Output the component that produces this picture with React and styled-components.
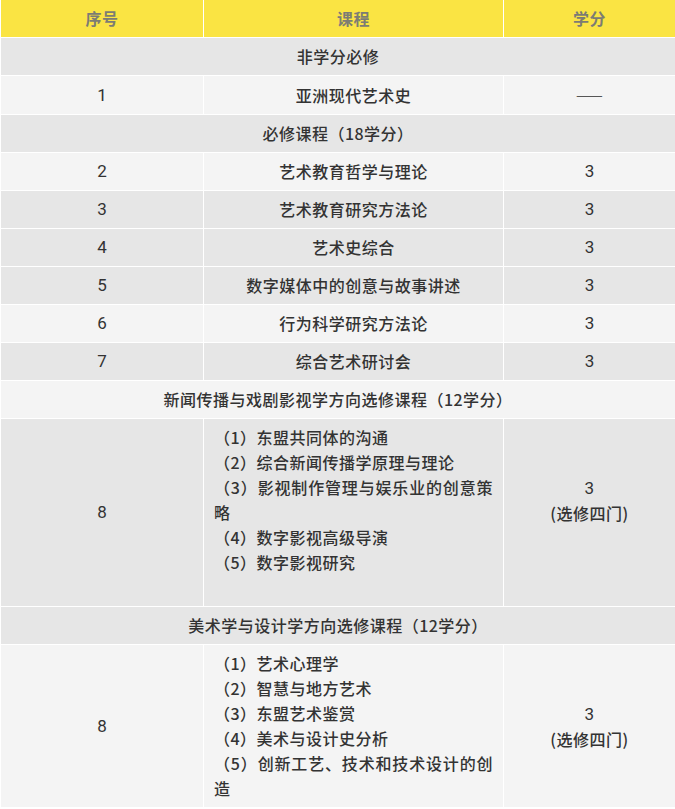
import React from "react";
import styled, { createGlobalStyle } from "styled-components";

const GlobalStyle = createGlobalStyle`
  html, body { margin: 0; padding: 0; background: #ffffff; }
  body { font-family: "Roboto", "Noto Sans CJK SC", "Noto Sans", sans-serif; }
`;

const tones = {
  yellow: "#fae443",
  dark: "#e6e6e6",
  light: "#f4f4f4",
};

const Table = styled.table`
  width: 675px;
  border-collapse: collapse;
  table-layout: fixed;
  font-size: 16px;
  line-height: 25px;
  color: #333333;
`;

const Col = styled.col`
  width: ${(p) => p.$w}px;
`;

const HeadCell = styled.th`
  background: ${tones.yellow};
  color: #7c7c74;
  font-family: "Noto Sans CJK SC", sans-serif;
  font-weight: 700;
  font-size: 16px;
  letter-spacing: 0.5px;
  height: 24px;
  padding: 6px 10px;
  text-align: center;
  border: 1px solid #ffffff;
  border-top: none;
`;

const Cell = styled.td`
  background: ${(p) => tones[p.$tone]};
  padding: 6px 10px;
  text-align: ${(p) => (p.$left ? "justify" : "center")};
  vertical-align: middle;
  border: 1px solid #ffffff;
  font-weight: ${(p) => (p.$num ? 400 : 500)};
  font-size: ${(p) => (p.$num ? 17 : 16)}px;
  letter-spacing: ${(p) => (p.$num ? 0 : 0.5)}px;
  font-family: ${(p) =>
    p.$num ? `"Roboto", "Noto Sans CJK SC", sans-serif` : `"Noto Sans CJK SC", sans-serif`};
`;

const Digit = styled.span`
  font-family: "Roboto", sans-serif;
  font-weight: 400;
  font-size: 17px;
`;

const Dash = styled.span`
  color: #555;
  font-family: "Noto Sans CJK SC", sans-serif;
  font-weight: 400;
  font-size: 16px;
`;

const Lines = ({ items, trailing }) => (
  <>
    {items.map((t, i) => (
      <React.Fragment key={i}>
        {t}
        {i < items.length - 1 && <br />}
      </React.Fragment>
    ))}
    {trailing && (
      <>
        <br />
        <br />
      </>
    )}
  </>
);

const rows = [
  { section: "非学分必修", tone: "dark" },
  { no: "1", name: "亚洲现代艺术史", credit: "dash", tone: "light" },
  { section: "必修课程（18学分）", tone: "dark" },
  { no: "2", name: "艺术教育哲学与理论", credit: "3", tone: "light" },
  { no: "3", name: "艺术教育研究方法论", credit: "3", tone: "dark" },
  { no: "4", name: "艺术史综合", credit: "3", tone: "dark" },
  { no: "5", name: "数字媒体中的创意与故事讲述", credit: "3", tone: "dark" },
  { no: "6", name: "行为科学研究方法论", credit: "3", tone: "light" },
  { no: "7", name: "综合艺术研讨会", credit: "3", tone: "dark" },
  { section: "新闻传播与戏剧影视学方向选修课程（12学分）", tone: "light" },
  {
    no: "8",
    list: [
      "（1）东盟共同体的沟通",
      "（2）综合新闻传播学原理与理论",
      "（3）影视制作管理与娱乐业的创意策略",
      "（4）数字影视高级导演",
      "（5）数字影视研究",
    ],
    trailing: true,
    tone: "dark",
  },
  { section: "美术学与设计学方向选修课程（12学分）", tone: "dark" },
  {
    no: "8",
    list: [
      "（1）艺术心理学",
      "（2）智慧与地方艺术",
      "（3）东盟艺术鉴赏",
      "（4）美术与设计史分析",
      "（5）创新工艺、技术和技术设计的创造",
    ],
    trailing: false,
    tone: "light",
  },
];

export default function App() {
  return (
    <>
      <GlobalStyle />
      <Table>
        <colgroup>
          <Col $w={203} />
          <Col $w={300} />
          <Col $w={172} />
        </colgroup>
        <thead>
          <tr>
            <HeadCell>序号</HeadCell>
            <HeadCell>课程</HeadCell>
            <HeadCell>学分</HeadCell>
          </tr>
        </thead>
        <tbody>
          {rows.map((r, i) => {
            if (r.section) {
              return (
                <tr key={i}>
                  <Cell $tone={r.tone} colSpan={3}>
                    {r.section}
                  </Cell>
                </tr>
              );
            }
            if (r.list) {
              return (
                <tr key={i}>
                  <Cell $tone={r.tone} $num>
                    {r.no}
                  </Cell>
                  <Cell $tone={r.tone} $left>
                    <Lines items={r.list} trailing={r.trailing} />
                  </Cell>
                  <Cell $tone={r.tone}>
                    <Digit>3</Digit>
                    <br />
                    (选修四门)
                    {r.trailing && (
                      <>
                        <br />
                        <br />
                      </>
                    )}
                  </Cell>
                </tr>
              );
            }
            return (
              <tr key={i}>
                <Cell $tone={r.tone} $num>
                  {r.no}
                </Cell>
                <Cell $tone={r.tone}>{r.name}</Cell>
                <Cell $tone={r.tone} $num>
                  {r.credit === "dash" ? <Dash>——</Dash> : r.credit}
                </Cell>
              </tr>
            );
          })}
        </tbody>
      </Table>
    </>
  );
}
